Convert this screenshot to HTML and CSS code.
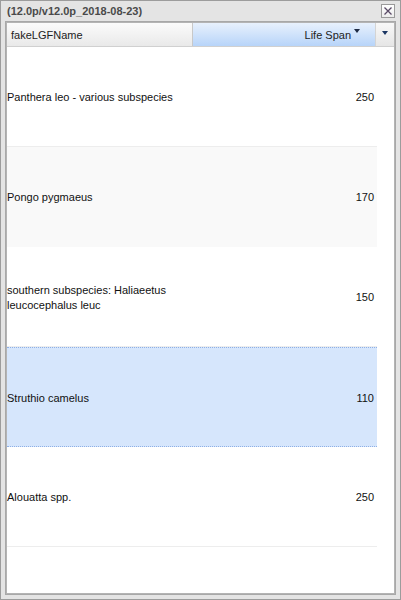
FILE: index.html
```html
<!DOCTYPE html>
<html lang="en">
<head>
    <meta charset="UTF-8">
    <title>Life Span</title>
    <link rel="stylesheet" href="styles.css">
</head>
<body>
    <div class="window">
        <div class="titlebar">
            <span class="title">(12.0p/v12.0p_2018-08-23)</span>
            <span class="close-btn">
                <svg width="12" height="12" viewBox="0 0 12 12">
                    <path d="M2.5 2.5 L9.5 9.5 M9.5 2.5 L2.5 9.5" stroke="#5a4a66" stroke-width="1.3"/>
                </svg>
            </span>
        </div>
        <div class="panel">
            <div class="grid-header">
                <div class="hcell name-head">fakeLGFName</div>
                <div class="hcell span-head">Life Span<span class="sort-arrow"></span></div>
                <div class="menu-btn"><span class="menu-arrow"></span></div>
            </div>
            <div class="rows">
                <div class="row">
                    <div class="cell name">Panthera leo - various subspecies</div>
                    <div class="cell num">250</div>
                </div>
                <div class="row alt">
                    <div class="cell name">Pongo pygmaeus</div>
                    <div class="cell num">170</div>
                </div>
                <div class="row">
                    <div class="cell name">southern subspecies: Haliaeetus leucocephalus leuc</div>
                    <div class="cell num">150</div>
                </div>
                <div class="row selected">
                    <div class="cell name">Struthio camelus</div>
                    <div class="cell num">110</div>
                </div>
                <div class="row">
                    <div class="cell name">Alouatta spp.</div>
                    <div class="cell num">250</div>
                </div>
            </div>
        </div>
    </div>
</body>
</html>
```

FILE: styles.css
```css
body {
    margin: 0;
    font-family: "Liberation Sans", Arial, sans-serif;
    background: #ffffff;
}
.window {
    width: 401px;
    height: 600px;
    box-sizing: border-box;
    border: 1px solid #9c9c9c;
    background-color: #e4e4e4;
    display: flex;
    flex-direction: column;
}
.titlebar {
    height: 20px;
    display: flex;
    align-items: center;
    justify-content: space-between;
    padding: 0 5px 0 6px;
}
.title {
    font-size: 11px;
    font-weight: bold;
    color: #4a4a4a;
}
.close-btn {
    width: 12px;
    height: 12px;
    border: 1px solid #9a9a9a;
    background: linear-gradient(#ffffff, #ececec);
    display: flex;
}
.panel {
    flex: 1;
    margin: 0 4px 4px 4px;
    border: 1px solid #a8a8a8;
    box-shadow: inset 1px 1px 0 #b4b4b4, inset -1px -1px 0 #b4b4b4;
    padding: 1px;
    background-color: #ffffff;
    display: flex;
    flex-direction: column;
}
.grid-header {
    display: flex;
    height: 24px;
    box-sizing: border-box;
    border-bottom: 1px solid #d0d0d0;
    font-size: 11px;
    color: #222;
}
.hcell {
    display: flex;
    align-items: center;
    box-sizing: border-box;
}
.name-head {
    width: 186px;
    padding-left: 4px;
    border-right: 1px solid #c8c8c8;
    background: linear-gradient(#fbfbfb, #e9e9e9);
}
.span-head {
    width: 182px;
    justify-content: flex-end;
    padding-right: 24px;
    position: relative;
    background: linear-gradient(#e8f1fd, #b7d4f9);
}
.sort-arrow {
    position: absolute;
    right: 15px;
    top: 6px;
    border-left: 3.5px solid transparent;
    border-right: 3.5px solid transparent;
    border-top: 4px solid #1d2a44;
}
.menu-btn {
    flex: 1;
    border-left: 1px solid #d4d4d4;
    background: linear-gradient(#f8f8f8, #e6e6e6);
    display: flex;
    justify-content: center;
    padding-top: 8px;
    box-sizing: border-box;
}
.menu-arrow {
    width: 0;
    height: 0;
    border-left: 3.5px solid transparent;
    border-right: 3.5px solid transparent;
    border-top: 4px solid #1c3663;
}
.rows {
    width: 370px;
}
.row {
    height: 100px;
    box-sizing: border-box;
    padding-top: 2px;
    display: flex;
    align-items: center;
    border-bottom: 1px solid #ededed;
    font-size: 11px;
    line-height: 15px;
    color: #111;
}
.row.alt {
    background-color: #f9f9f9;
    border-bottom-color: #f9f9f9;
}
.row.selected {
    background-color: #d6e6fc;
    border-top: 1px dotted #8fb0e6;
    border-bottom: 1px dotted #8fb0e6;
}
.cell.name {
    width: 186px;
}
.cell.num {
    flex: 1;
    text-align: right;
    padding-right: 3px;
}
```
